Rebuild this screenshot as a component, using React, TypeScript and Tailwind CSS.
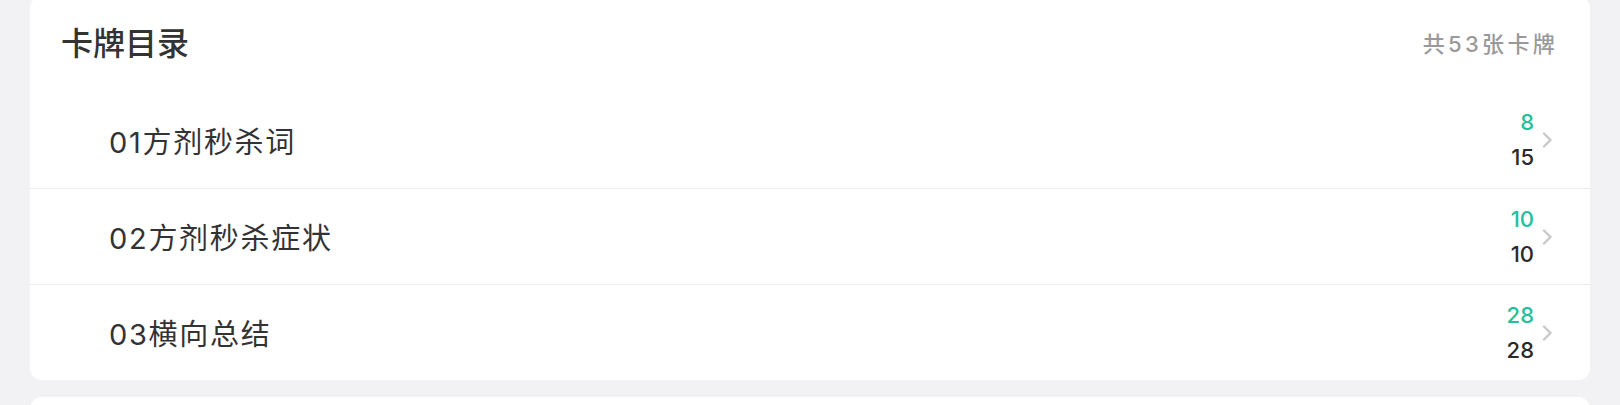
import React from "react";

const rows = [
  { name: "01方剂秒杀词", a: "8", b: "15" },
  { name: "02方剂秒杀症状", a: "10", b: "10" },
  { name: "03横向总结", a: "28", b: "28" },
];

function Chevron() {
  return (
    <svg width="11" height="16" viewBox="0 0 11 16" fill="none">
      <path d="M2 1.5 L8.5 8 L2 14.5" stroke="#c9c9cc" strokeWidth="2.4" strokeLinecap="round" strokeLinejoin="round" />
    </svg>
  );
}

export default function App() {
  return (
    <div
      className="w-[1620px] h-[405px] overflow-hidden bg-[#f2f2f4] px-[30px]"
      style={{ fontFamily: 'Inter, "Noto Sans CJK SC", sans-serif' }}
    >
      <div className="-mt-[4px] bg-white rounded-xl">
        <div className="h-[96px] flex items-center justify-between pl-[31px] pr-[32px]">
          <div className="text-[32px] font-medium text-[#333333]">卡牌目录</div>
          <div className="text-[22px] text-[#999999] tracking-[3.3px] font-medium">共53张卡牌</div>
        </div>
        {rows.map((r, i) => (
          <div
            key={i}
            className={`h-[96px] flex items-center justify-between pl-[79px] pr-[37px] ${i > 0 ? "border-t border-[#ececee]" : ""}`}
          >
            <div className="text-[29px] text-[#333333] tracking-[1.7px] pt-[5px]">{r.name}</div>
            <div className="flex items-center gap-[8px]">
              <div className="flex flex-col items-end text-[22px] leading-[35px] font-medium">
                <span className="text-[#22c19b]">{r.a}</span>
                <span className="text-[#2a2a2a]">{r.b}</span>
              </div>
              <Chevron />
            </div>
          </div>
        ))}
      </div>
      <div className="mt-[17px] h-[40px] bg-white rounded-xl" />
    </div>
  );
}
